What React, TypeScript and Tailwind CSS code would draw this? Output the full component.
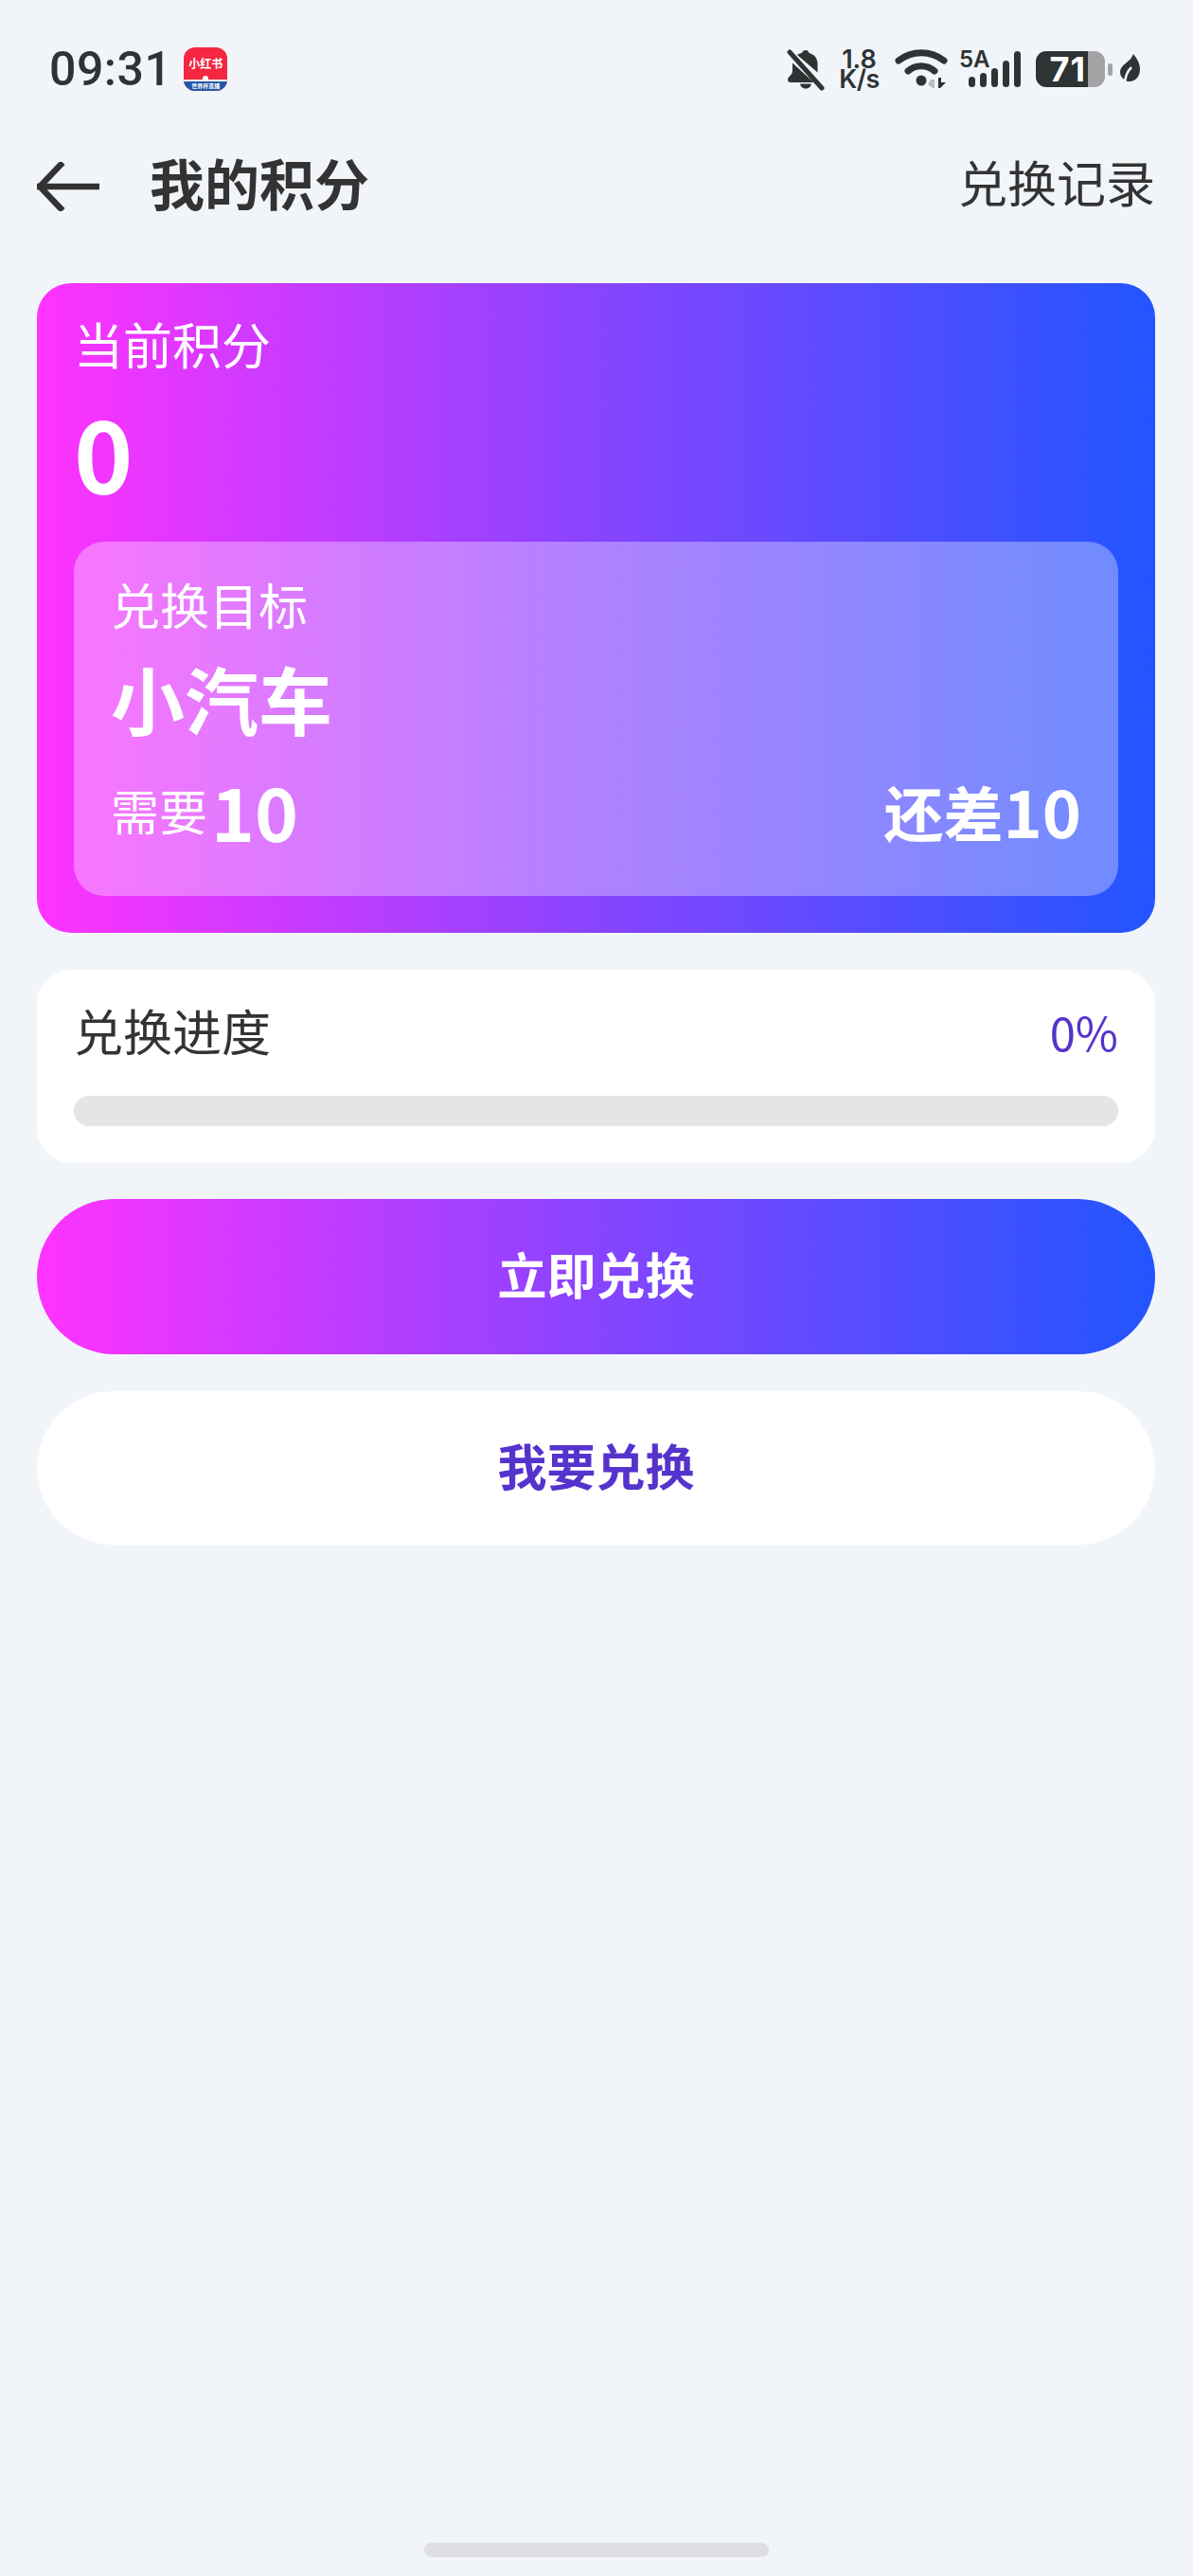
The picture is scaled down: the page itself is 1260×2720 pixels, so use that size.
const gradient = "bg-linear-to-r/srgb from-[#ff33ff] via-[#8844ff] to-[#2255ff]";

function AppBadge() {
  return (
    <div className="ml-[13px] flex h-[46px] w-[46px] flex-col overflow-hidden rounded-[12px] bg-[#f5263f]">
      <div className="flex h-[30px] items-center justify-center pt-[4px] text-[12px] leading-none font-bold text-white">
        小红书
      </div>
      <div className="mx-auto h-[4px] w-[6px] rounded-t-full bg-white" />
      <div className="flex flex-1 items-center justify-center border-t-2 border-[#f7f7f7] bg-[#2456a6] text-[6px] leading-none font-bold whitespace-nowrap text-white">
        世界杯直播
      </div>
    </div>
  );
}

function BellOff() {
  return (
    <svg width="42" height="46" viewBox="0 0 42 46" fill="none">
      <path
        d="M21 3c2 0 3 1 3.500 3 6 1.500 9 6 9 12v8.500L12 8c1.500-1 2.500-1.600 5-2 .5-2 2-3 4-3zM7 16.500 29.500 37H5c-2 0-3-1-3-3 0-1.500 1-2.500 2-3.500 2-2 3-3.500 3-6.500z"
        fill="#2e3333"
      />
      <path d="M15 38.500h12c-.5 3-3 5-6 5s-5.500-2-6-5z" fill="#2e3333" />
      <path d="M4 5l34 38" stroke="#2e3333" strokeWidth="5" strokeLinecap="round" />
    </svg>
  );
}

function Wifi() {
  return (
    <svg width="56" height="44" viewBox="0 0 56 44" fill="none">
      <path d="M4 13c14-11 34-11 48 0" stroke="#2e3333" strokeWidth="7" strokeLinecap="round" />
      <path d="M14 24c8-7 20-7 28 0" stroke="#2e3333" strokeWidth="7" strokeLinecap="round" />
      <circle cx="28" cy="34" r="5.500" fill="#2e3333" />
      <path d="M38 33h4v9h-2l-5-4z" fill="#b8bcbf" />
      <path d="M46 31h3v5h5l-6 6h-2z" fill="#2e3333" />
    </svg>
  );
}

function SignalBars() {
  return (
    <svg width="56" height="38" viewBox="0 0 56 38" fill="#2e3333">
      <rect x="0" y="27" width="7" height="11" rx="3.500" />
      <rect x="12" y="23" width="7" height="15" rx="3.500" />
      <rect x="24" y="18" width="7" height="20" rx="3.500" />
      <rect x="36" y="10" width="7" height="28" rx="3.500" />
      <rect x="48" y="0" width="7" height="38" rx="3.500" />
    </svg>
  );
}

function Leaf() {
  return (
    <svg width="21" height="33" viewBox="0 0 21 33" fill="none">
      <path d="M14 0c4 5 7 10 7 16 0 8-5 13-11 13-1.500 0-3 0-4-1C2 26 0 23 0 19 0 11 11 9 14 0z" fill="#2e3333" />
      <path d="M5 32c0-7 2-13 7-18" stroke="#f1f5f9" strokeWidth="2.500" />
    </svg>
  );
}

function StatusBar() {
  return (
    <div className="flex h-[146px] items-center justify-between pr-[56px] pl-[52px]">
      <div className="flex items-center">
        <span className="font-['Roboto',sans-serif] text-[50px] leading-none font-medium tracking-[0.5px] text-[#2e3333]">09:31</span>
        <AppBadge />
      </div>
      <div className="flex items-center font-['Inter',sans-serif]">
        <BellOff />
        <div className="ml-[15px] flex w-[41px] flex-col items-center text-[27px] leading-[21px] font-semibold text-[#2e3333]">
          <span>1.8</span>
          <span className="tracking-[-0.5px]">K/s</span>
        </div>
        <div className="ml-[17px]">
          <Wifi />
        </div>
        <div className="relative ml-[12px] flex h-[38px] w-[66px] justify-end">
          <span className="absolute top-[-2px] left-0 text-[24px] leading-[22px] font-semibold text-[#2e3333]">5A</span>
          <SignalBars />
        </div>
        <div className="ml-[15px] flex h-[38px] w-[73px]">
          <div className="flex w-[55px] items-center justify-end rounded-l-[11px] bg-[#2e3333] pr-[2px] text-[36px] leading-none font-bold tracking-[1px] text-white">
            71
          </div>
          <div className="flex-1 rounded-r-[11px] bg-[#a3a3a6]" />
        </div>
        <div className="ml-[3px] h-[13px] w-[5px] rounded-full bg-[#a3a3a6]" />
        <div className="ml-[8px]">
          <Leaf />
        </div>
      </div>
    </div>
  );
}

function NavBar() {
  return (
    <div className="flex h-[102px] items-center justify-between pr-[40px] pl-[39px]">
      <div className="flex items-center">
        <svg width="66" height="52" viewBox="0 0 66 52" fill="none">
          <path d="M25 3 3 26l22 23M3 26h62" stroke="#333333" strokeWidth="6.500" strokeLinecap="square" strokeLinejoin="miter" />
        </svg>
        <h1 className="mb-[11px] ml-[53px] text-[58px] leading-none font-bold text-[#333333]">我的积分</h1>
      </div>
      <span className="mb-[10px] text-[52px] leading-none text-[#333333]">兑换记录</span>
    </div>
  );
}

function PointsCard() {
  return (
    <section className={`rounded-[36px] px-[39px] pt-[34px] pb-[39px] text-white ${gradient}`}>
      <div className="text-[52px] leading-[60px]">当前积分</div>
      <div className="mt-[28px] text-[106px] leading-[110px] font-bold">0</div>
      <div className="mt-[41px] rounded-[32px] bg-white/33 px-[39px] pt-[36px] pb-[49px]">
        <div className="text-[52px] leading-[60px]">兑换目标</div>
        <div className="mt-[27px] text-[78px] leading-[84px] font-bold">小汽车</div>
        <div className="mt-[34px] flex h-[84px] items-center justify-between">
          <div className="flex items-center">
            <span className="text-[51px] leading-none">需要</span>
            <span className="ml-[4px] text-[78px] leading-none font-bold">10</span>
          </div>
          <div className="flex items-center font-bold">
            <span className="text-[63px] leading-none">还差</span>
            <span className="text-[70px] leading-none">10</span>
          </div>
        </div>
      </div>
    </section>
  );
}

function ProgressCard() {
  const percent = 0;
  return (
    <section className="mt-[39px] rounded-[36px] bg-white px-[39px] pt-[34px] pb-[39px]">
      <div className="flex h-[60px] items-center justify-between">
        <span className="text-[52px] leading-none text-[#333333]">兑换进度</span>
        <span className="text-[49px] leading-none text-[#5533cc]">{percent}%</span>
      </div>
      <div className="mt-[39px] h-[32px] overflow-hidden rounded-full bg-[#e5e5e5]">
        <div className={`h-full ${gradient}`} style={{ width: `${percent}%` }} />
      </div>
    </section>
  );
}

export default function App() {
  return (
    <div className="flex min-h-[2720px] flex-col bg-[#f1f5f9] font-['Noto_Sans_CJK_SC',sans-serif]">
      <StatusBar />
      <NavBar />
      <main className="mt-[51px] px-[39px] pr-[40px]">
        <PointsCard />
        <ProgressCard />
        <button type="button" className={`mt-[38px] block h-[164px] w-full rounded-full pb-[6px] text-[52px] font-bold text-white ${gradient}`}>
          立即兑换
        </button>
        <button type="button" className="mt-[39px] block h-[162px] w-full rounded-full bg-white pb-[6px] text-[52px] font-bold text-[#5533cc]">
          我要兑换
        </button>
      </main>
      <div className="mt-auto flex justify-center pb-[20px]">
        <div className="h-[15px] w-[364px] rounded-full bg-[#dedee4]" />
      </div>
    </div>
  );
}
